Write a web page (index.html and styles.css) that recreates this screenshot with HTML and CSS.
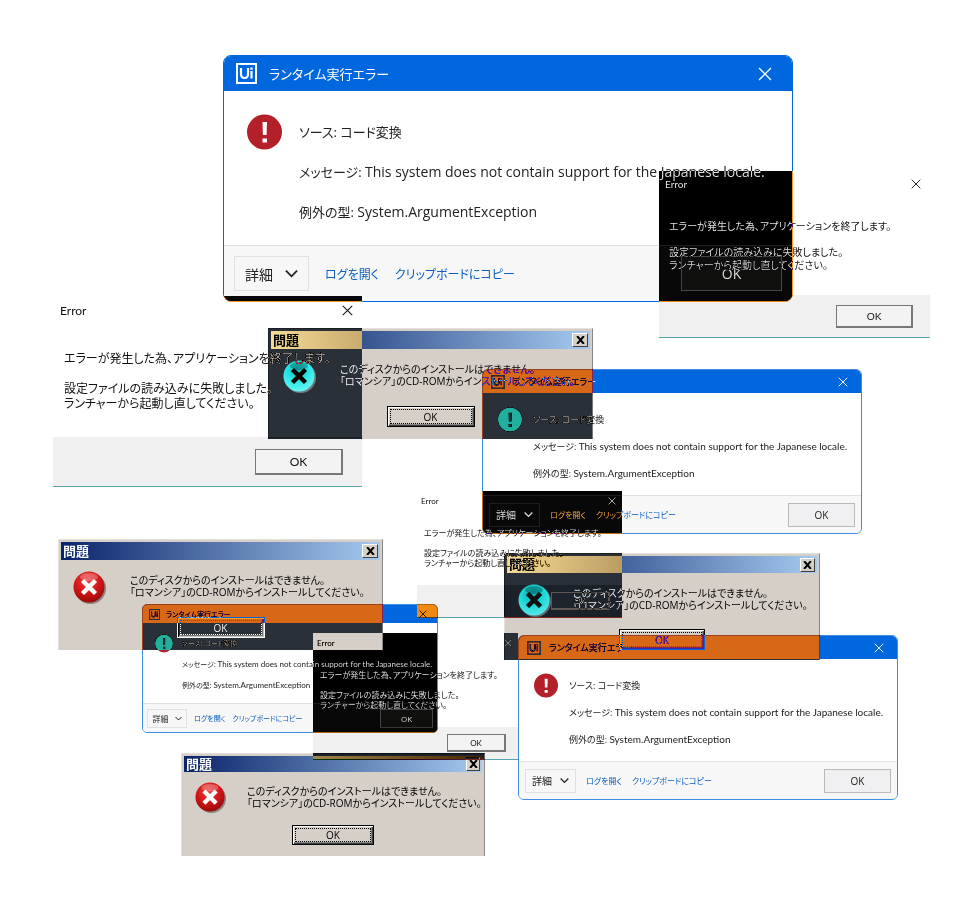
FILE: index.html
```
<!DOCTYPE html>
<html lang="ja">
<head>
<meta charset="utf-8">
<meta name="viewport" content="width=device-width, initial-scale=1">
<title>ランタイム実行エラー</title>
<link rel="stylesheet" href="styles.css">
</head>
<body>
<svg class="defs" aria-hidden="true">
  <defs>
    <radialGradient id="ball" cx="45%" cy="30%" r="75%">
      <stop offset="0" stop-color="#ee4444"/>
      <stop offset="0.5" stop-color="#d41818"/>
      <stop offset="1" stop-color="#900808"/>
    </radialGradient>
    <symbol id="logo" viewBox="0 0 21 21">
      <rect x="1" y="1" width="19" height="19" fill="none" stroke="#fff" stroke-width="2"/>
      <path d="M5 5v6q0 4 3.500 4t3.500-4v-6M15.500 8v7.500" fill="none" stroke="#fff" stroke-width="2.200"/>
      <rect x="14.300" y="4.500" width="2.400" height="2.200" fill="#fff"/>
    </symbol>
    <symbol id="cross" viewBox="0 0 14 14">
      <path d="M1 1l12 12M13 1L1 13" fill="none" stroke="currentColor" stroke-width="1.300"/>
    </symbol>
    <symbol id="alert" viewBox="0 0 35 35">
      <circle cx="17.500" cy="17.500" r="17.500" fill="#b3202a"/>
      <path d="M15.500 7.500h4.500l-.4 13h-3.700zM15.500 24h4.500v4h-4.500z" fill="#fff"/>
    </symbol>
    <symbol id="chevron" viewBox="0 0 14 8">
      <path d="M1 1l6 6 6-6" fill="none" stroke="currentColor" stroke-width="2"/>
    </symbol>
    <symbol id="stop" viewBox="0 0 33 33">
      <circle cx="17.500" cy="17.500" r="15.500" fill="#8c8680"/>
      <circle cx="16" cy="16" r="15.500" fill="url(#ball)"/>
      <ellipse cx="16" cy="6" rx="9" ry="4" fill="#fff" opacity=".25"/>
      <path d="M9.500 9.500l13 13M22.500 9.500l-13 13" stroke="#fff" stroke-width="4.500"/>
    </symbol>
    <symbol id="xbold" viewBox="0 0 8 7">
      <path d="M1 0l6 7M7 0L1 7" stroke="#000" stroke-width="1.800"/>
    </symbol>
  </defs>
</svg>

<main class="desktop">

  <section class="dlg run run-l at-run1">
    <header class="run-bar"><svg class="run-logo"><use href="#logo"/></svg><h2 class="run-title">ランタイム実行エラー</h2><button class="x" aria-label="閉じる"><svg><use href="#cross"/></svg></button></header>
    <div class="run-body">
      <svg class="run-icon"><use href="#alert"/></svg>
      <div class="run-text"><p>ソース: コード変換</p><p>メッセージ: <span lang="en">This system does not contain support for the Japanese locale.</span></p><p>例外の型: <span lang="en">System.ArgumentException</span></p></div>
    </div>
    <footer class="run-foot"><button class="more">詳細<svg><use href="#chevron"/></svg></button><a href="#log">ログを開く</a><a href="#copy">クリップボードにコピー</a><button class="run-ok">OK</button></footer>
  </section>

  <section class="dlg err err-m at-err1">
    <header class="err-bar"><h2>Error</h2><button class="x" aria-label="閉じる"><svg><use href="#cross"/></svg></button></header>
    <div class="err-body"><p>エラーが発生した為、アプリケーションを終了します。</p><p>設定ファイルの読み込みに失敗しました。<br>ランチャーから起動し直してください。</p></div>
    <footer class="err-foot"><button class="err-ok">OK</button></footer>
  </section>

  <section class="dlg err err-l at-err2">
    <header class="err-bar"><h2>Error</h2><button class="x" aria-label="閉じる"><svg><use href="#cross"/></svg></button></header>
    <div class="err-body"><p>エラーが発生した為、アプリケーションを終了します。</p><p>設定ファイルの読み込みに失敗しました。<br>ランチャーから起動し直してください。</p></div>
    <footer class="err-foot"><button class="err-ok">OK</button></footer>
  </section>

  <section class="dlg old old-l at-old1">
    <header class="old-bar"><h2>問題</h2><button class="old-x" aria-label="閉じる"><svg><use href="#xbold"/></svg></button></header>
    <div class="old-body"><svg class="old-icon"><use href="#stop"/></svg><p>このディスクからのインストールはできません。<br>「ロマンシア」のCD-ROMからインストールしてください。</p></div>
    <button class="old-ok"><span>OK</span></button>
  </section>

  <section class="dlg run run-m at-run2">
    <header class="run-bar"><svg class="run-logo"><use href="#logo"/></svg><h2 class="run-title">ランタイム実行エラー</h2><button class="x" aria-label="閉じる"><svg><use href="#cross"/></svg></button></header>
    <div class="run-body">
      <svg class="run-icon"><use href="#alert"/></svg>
      <div class="run-text"><p>ソース: コード変換</p><p>メッセージ: <span lang="en">This system does not contain support for the Japanese locale.</span></p><p>例外の型: <span lang="en">System.ArgumentException</span></p></div>
    </div>
    <footer class="run-foot"><button class="more">詳細<svg><use href="#chevron"/></svg></button><a href="#log">ログを開く</a><a href="#copy">クリップボードにコピー</a><button class="run-ok">OK</button></footer>
  </section>

  <section class="dlg err err-s at-err3">
    <header class="err-bar"><h2>Error</h2><button class="x" aria-label="閉じる"><svg><use href="#cross"/></svg></button></header>
    <div class="err-body"><p>エラーが発生した為、アプリケーションを終了します。</p><p>設定ファイルの読み込みに失敗しました。<br>ランチャーから起動し直してください。</p></div>
    <footer class="err-foot"><button class="err-ok">OK</button></footer>
  </section>

  <section class="dlg old old-l at-old2">
    <header class="old-bar"><h2>問題</h2><button class="old-x" aria-label="閉じる"><svg><use href="#xbold"/></svg></button></header>
    <div class="old-body"><svg class="old-icon"><use href="#stop"/></svg><p>このディスクからのインストールはできません。<br>「ロマンシア」のCD-ROMからインストールしてください。</p></div>
    <button class="old-ok"><span>OK</span></button>
  </section>

  <section class="dlg old old-m at-old3">
    <header class="old-bar"><h2>問題</h2><button class="old-x" aria-label="閉じる"><svg><use href="#xbold"/></svg></button></header>
    <div class="old-body"><svg class="old-icon"><use href="#stop"/></svg><p>このディスクからのインストールはできません。<br>「ロマンシア」のCD-ROMからインストールしてください。</p></div>
    <button class="old-ok"><span>OK</span></button>
  </section>

  <section class="dlg run run-s at-run4">
    <header class="run-bar"><svg class="run-logo"><use href="#logo"/></svg><h2 class="run-title">ランタイム実行エラー</h2><button class="x" aria-label="閉じる"><svg><use href="#cross"/></svg></button></header>
    <div class="run-body">
      <svg class="run-icon"><use href="#alert"/></svg>
      <div class="run-text"><p>ソース: コード変換</p><p>メッセージ: <span lang="en">This system does not contain support for the Japanese locale.</span></p><p>例外の型: <span lang="en">System.ArgumentException</span></p></div>
    </div>
    <footer class="run-foot"><button class="more">詳細<svg><use href="#chevron"/></svg></button><a href="#log">ログを開く</a><a href="#copy">クリップボードにコピー</a><button class="run-ok">OK</button></footer>
  </section>

  <section class="dlg old old-s at-old4">
    <header class="old-bar"><h2>問題</h2><button class="old-x" aria-label="閉じる"><svg><use href="#xbold"/></svg></button></header>
    <div class="old-body"><svg class="old-icon"><use href="#stop"/></svg><p>このディスクからのインストールはできません。<br>「ロマンシア」のCD-ROMからインストールしてください。</p></div>
    <button class="old-ok"><span>OK</span></button>
  </section>

  <section class="dlg err err-s at-err4">
    <header class="err-bar"><h2>Error</h2><button class="x" aria-label="閉じる"><svg><use href="#cross"/></svg></button></header>
    <div class="err-body"><p>エラーが発生した為、アプリケーションを終了します。</p><p>設定ファイルの読み込みに失敗しました。<br>ランチャーから起動し直してください。</p></div>
    <footer class="err-foot"><button class="err-ok">OK</button></footer>
  </section>

  <section class="dlg run run-m at-run3">
    <header class="run-bar"><svg class="run-logo"><use href="#logo"/></svg><h2 class="run-title">ランタイム実行エラー</h2><button class="x" aria-label="閉じる"><svg><use href="#cross"/></svg></button></header>
    <div class="run-body">
      <svg class="run-icon"><use href="#alert"/></svg>
      <div class="run-text"><p>ソース: コード変換</p><p>メッセージ: <span lang="en">This system does not contain support for the Japanese locale.</span></p><p>例外の型: <span lang="en">System.ArgumentException</span></p></div>
    </div>
    <footer class="run-foot"><button class="more">詳細<svg><use href="#chevron"/></svg></button><a href="#log">ログを開く</a><a href="#copy">クリップボードにコピー</a><button class="run-ok">OK</button></footer>
  </section>

</main>
</body>
</html>
```
FILE: styles.css
```
* { box-sizing: border-box; margin: 0; padding: 0; }

body {
  background: #fff;
  font-family: "Open Sans", "Noto Sans CJK JP", sans-serif;
  font-feature-settings: "palt";
  color: #222;
}

h2 { font-size: inherit; font-weight: 400; }
button { font: inherit; font-feature-settings: inherit; color: inherit; background: none; border: 0; }
svg { display: block; flex: none; }
.defs { position: absolute; width: 0; height: 0; }

/* Windows lie freely on the desktop; where two overlap their colours are subtracted. */
.desktop { position: relative; isolation: isolate; min-height: 100vh; overflow: hidden; }
.dlg { position: absolute; mix-blend-mode: difference; white-space: nowrap; overflow: hidden; }

.at-run1 { left: 223px; top: 55px; }
.at-run2 { left: 482px; top: 369px; }
.at-run3 { left: 518px; top: 635px; }
.at-run4 { left: 142px; top: 604px; }
.at-err1 { left: 53px; top: 296px; }
.at-err2 { left: 659px; top: 171px; }
.at-err3 { left: 417px; top: 491px; }
.at-err4 { left: 313px; top: 633px; }
.at-old1 { left: 268px; top: 328px; }
.at-old2 { left: 58px; top: 539px; }
.at-old3 { left: 504px; top: 553px; }
.at-old4 { left: 181px; top: 753px; }

.x { display: flex; align-items: center; justify-content: center; margin-left: auto; }
.x svg { width: var(--x); height: var(--x); }

/* Runtime error */
.run { width: var(--w); background: #fff; border: 1px solid var(--edge); border-radius: var(--r); font-size: var(--fs); }
.run-l { --edge: #0067df; --w: 570px; --r: 8px; --fs: 13px; --en: 14px; --link: 12px; --btn: 14px; --bar: 35px; --logo: 21px; --in: 12px; --gap: 12px; --x: 14px; --xr: 20px;
  --icon: 35px; --lh: 40px; --bl: 23px; --tg: 17px; --pt: 21px; --pb: 13px; --foot: 56px; --bh: 35px; --mw: 75px; --mg: 16px; --ow: 101px; --fp: 10px; --cv: 13px; --cg: 12px; }
.run-m { --edge: #3d8ce6; --w: 380px; --r: 6px; --fs: 9px; --en: 10px; --link: 8px; --btn: 10px; --bar: 23px; --logo: 14px; --in: 8px; --gap: 8px; --x: 10px; --xr: 13px;
  --icon: 24px; --lh: 27px; --bl: 15px; --tg: 11px; --pt: 13px; --pb: 8px; --foot: 38px; --bh: 24px; --mw: 51px; --mg: 10px; --ow: 67px; --fp: 6px; --cv: 9px; --cg: 8px; }
.run-s { --edge: #3d8ce6; --w: 296px; --r: 5px; --fs: 7px; --en: 8px; --link: 7px; --btn: 8px; --bar: 18px; --logo: 11px; --in: 6px; --gap: 6px; --x: 8px; --xr: 10px;
  --icon: 18px; --lh: 21px; --bl: 12px; --tg: 9px; --pt: 10px; --pb: 7px; --foot: 29px; --bh: 19px; --mw: 40px; --mg: 7px; --ow: 53px; --fp: 4px; --cv: 7px; --cg: 6px; }
.run-m [lang="en"], .run-s [lang="en"] { font-family: Lato, sans-serif; }

.run-bar { display: flex; align-items: center; height: var(--bar); padding: 0 var(--xr) 0 var(--in); background: #0067df; color: #fff; }
.run-logo { width: var(--logo); height: var(--logo); }
.run-title { margin-left: var(--gap); }
.run-body { display: flex; gap: var(--tg); padding: var(--pt) 0 var(--pb) var(--bl); line-height: var(--lh); }
.run-body [lang="en"] { font-size: var(--en); }
.run-icon { width: var(--icon); height: var(--lh); }
.run-foot { display: flex; align-items: center; height: var(--foot); padding: 0 var(--fp); background: #f7f7f7; border-top: 1px solid #e2e2e2; }
.run-foot a { color: #0a5fc0; font-size: var(--link); text-decoration: none; margin-left: var(--mg); }
.run-foot button { font-size: var(--btn); }
.more { display: flex; align-items: center; justify-content: center; gap: var(--cg); width: var(--mw); height: var(--bh); border: 1px solid #dde3e5; }
.more svg { width: var(--cv); height: var(--cv); }
.run-ok { margin-left: auto; width: var(--ow); height: var(--bh); background: #f0f0f2; border: 1px solid #b8bcb8; }

/* Launcher error */
.err { width: var(--w); background: #fff; border-bottom: 1px solid #58a4ae; font-family: Lato, "Noto Sans CJK JP", sans-serif; font-size: var(--fs); color: #111; }
.err-m { --w: 309px; --fs: 12px; --lh: 15px; --bar: 28px; --pl: 7px; --xr: 9px; --x: 11px; --tl: 11px; --pt: 27px; --pb: 26px; --foot: 49px; --ow: 88px; --oh: 26px; --or: 19px; }
.err-l { --w: 271px; --fs: 10px; --lh: 13px; --bar: 25px; --pl: 6px; --xr: 9px; --x: 10px; --tl: 10px; --pt: 24px; --pb: 23px; --foot: 42px; --ow: 77px; --oh: 23px; --or: 17px; }
.err-s { --w: 205px; --fs: 8px; --lh: 10px; --bar: 19px; --pl: 4px; --xr: 6px; --x: 8px; --tl: 7px; --pt: 18px; --pb: 17px; --foot: 32px; --ow: 59px; --oh: 18px; --or: 12px; }
.err-bar { display: flex; align-items: center; height: var(--bar); padding: 0 var(--xr) 0 var(--pl); }
.err-body { padding: var(--pt) 0 var(--pb) var(--tl); line-height: var(--lh); }
.err-body p + p { margin-top: var(--lh); }
.err-foot { display: flex; align-items: center; justify-content: flex-end; height: var(--foot); padding-right: var(--or); background: #f0f0f0; }
.err-ok { width: var(--ow); height: var(--oh); background: #f3f3f3; border: 1px solid #777; border-right-width: 2px; border-bottom-width: 2px; }

/* Classic installer message */
.old { width: var(--w); padding: 2px 2px var(--end); background: #d6cfc8; border-left: 1px solid #e4e0dc; border-top: 1px solid #e4e0dc; border-right: 1px solid #888; font-size: 10px; color: #000; }
.old-l { --w: 325px; --end: 12px; --bar: 18px; --x: 16px; --bl: 12px; --icon: 33px; --gap: 24px; --pt: 11px; --pb: 13px; --ow: 88px; --oh: 21px; }
.old-m { --w: 316px; --end: 10px; --bar: 17px; --x: 15px; --bl: 11px; --icon: 33px; --gap: 22px; --pt: 11px; --pb: 12px; --ow: 86px; --oh: 21px; }
.old-s { --w: 304px; --end: 11px; --bar: 16px; --x: 14px; --bl: 11px; --icon: 31px; --gap: 21px; --pt: 10px; --pb: 12px; --ow: 82px; --oh: 20px; }
.old-bar { display: flex; align-items: center; justify-content: space-between; height: var(--bar); padding: 0 2px; background: linear-gradient(90deg, #0a246a, #a6caf0); color: #fff; }
.old-bar h2 { font-weight: 700; font-size: 13px; line-height: var(--bar); }
.old-x { display: flex; align-items: center; justify-content: center; width: var(--x); height: 14px; background: #d6cfc8; border: 1px solid; border-color: #fff #404040 #404040 #fff; }
.old-x svg { width: 9px; height: 8px; }
.old-body { display: flex; align-items: flex-start; gap: var(--gap); padding: var(--pt) 0 var(--pb) var(--bl); line-height: 12px; }
.old-body p { margin-top: 3px; }
.old-icon { width: var(--icon); height: var(--icon); }
.old-ok { display: block; width: var(--ow); height: var(--oh); margin: 0 auto; padding: 2px; border: 1px solid #000; box-shadow: inset 1px 1px #fff, inset -1px -1px #404040, inset -2px -2px #888; line-height: 12px; }
.old-ok span { display: flex; align-items: center; justify-content: center; height: 100%; border: 1px dotted #000; }
```
